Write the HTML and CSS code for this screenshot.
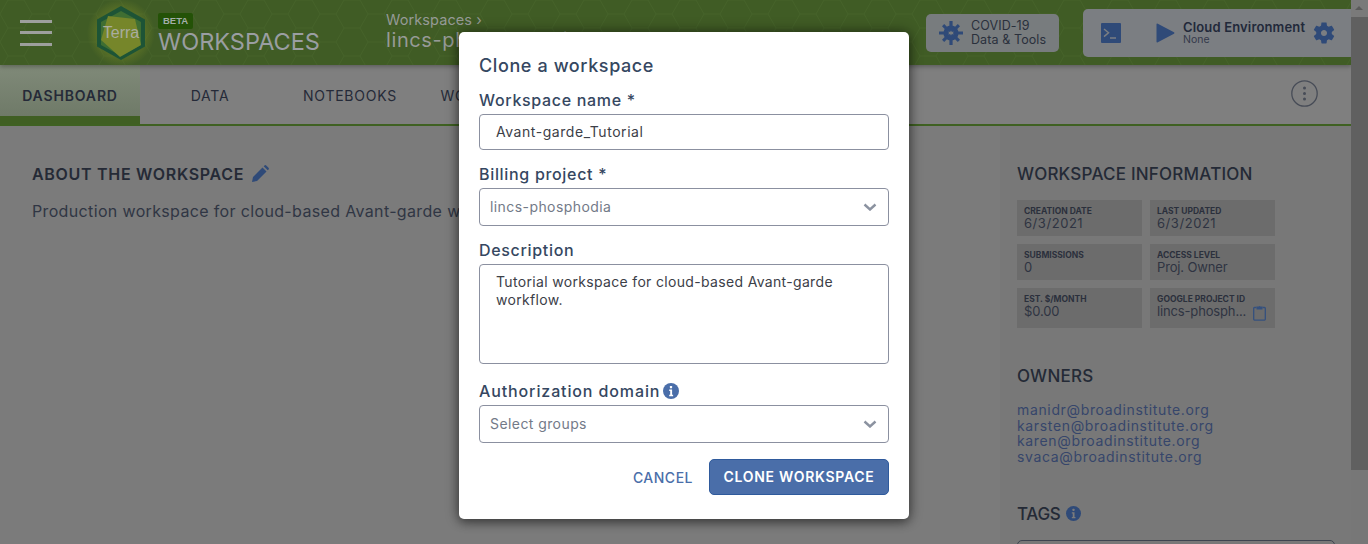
FILE: index.html
```html
<!DOCTYPE html>
<html lang="en">
<head>
<meta charset="utf-8">
<title>Clone a workspace</title>
<link rel="stylesheet" href="styles.css">
</head>
<body>
<div class="app">
  <div class="page">
    <header class="top">
      <svg class="hexbg" aria-hidden="true"><defs><pattern id="hx" width="48" height="28" patternUnits="userSpaceOnUse"><path d="M0 14l8-14h16l8 14-8 14H8zM32 14h16" fill="none" stroke="#4d6b30" stroke-width="1"/></pattern></defs><rect width="100%" height="100%" fill="url(#hx)"/></svg>
      <button class="burger" aria-label="Menu"><span></span><span></span><span></span></button>
      <svg class="logo" viewBox="0 0 70 66" aria-hidden="true">
        <defs><radialGradient id="gl"><stop offset=".6" stop-color="#6f8228" stop-opacity=".6"/><stop offset="1" stop-color="#6f8228" stop-opacity="0"/></radialGradient></defs>
        <circle cx="35" cy="33" r="34" fill="url(#gl)"/>
        <path d="M35 6l24 13.5v27L35 60 11 46.5v-27z" fill="#1d5436"/>
        <path d="M35 11l20 11v23L35 56 15 45V22z" fill="#3f6e32"/>
        <path d="M22 16l27 3 6 26-21 12-19-17z" fill="#76862a"/>
        <text x="35" y="38" text-anchor="middle" class="logotext">Terra</text>
      </svg>
      <div class="brand">
        <span class="beta">BETA</span>
        <span class="brandname">WORKSPACES</span>
      </div>
      <div class="crumbs">
        <div class="crumb">Workspaces ›</div>
        <div class="wsname">lincs-phosphodia/</div>
      </div>
      <div class="covid">
        <svg class="covidicon" viewBox="0 0 24 24" aria-hidden="true">
          <circle cx="12" cy="12" r="7.6"/>
          <path d="M10.4 0h3.2v6h-3.2zM10.4 18h3.2v6h-3.2zM0 10.4h6v3.2H0zM18 10.4h6v3.2h-6zM3 5.2L5.2 3l4.2 4.2-2.2 2.2zM14.6 16.8l2.2-2.2L21 18.800l-2.200 2.200zM18.800 3L21 5.200l-4.200 4.200-2.200-2.200zM7.200 14.600l2.200 2.200L5.200 21 3 18.800z"/>
          <path class="coviddots" d="M12 9.500l.9 1.600 1.700-.5-.5 1.400.5 1.400-1.700-.5-.9 1.600-.9-1.600-1.700.5.500-1.400-.5-1.400 1.700.5z"/>
        </svg>
        <div class="covidtext"><div>COVID-19</div><div>Data &amp; Tools</div></div>
      </div>
      <div class="cloud">
        <svg class="term" viewBox="0 0 20 20" aria-hidden="true"><rect width="20" height="20" rx="1"/><path d="M3 6l4.500 3.800L3 13.600M9 15h6" fill="none" stroke="#7b7e82" stroke-width="1.500"/></svg>
        <svg class="play" viewBox="0 0 19 20" aria-hidden="true"><path d="M.5 1.500q0-1.500 1.300-.8L18 9.200q1 .8 0 1.600L1.800 19.300q-1.300.7-1.300-.8z"/></svg>
        <div class="cloudtext"><div class="cloudname">Cloud Environment</div><div class="cloudsub">None</div></div>
        <svg class="gear" viewBox="0 0 24 24" aria-hidden="true"><path d="M19.140 12.940c.04-.3.06-.61.06-.94 0-.32-.02-.64-.07-.94l2.030-1.580c.18-.14.23-.41.12-.61l-1.920-3.320c-.12-.22-.37-.29-.59-.22l-2.390.96c-.5-.38-1.030-.7-1.620-.94l-.36-2.540c-.04-.24-.24-.41-.48-.41h-3.840c-.24 0-.43.17-.47.41l-.36 2.540c-.59.24-1.130.57-1.620.94l-2.390-.96c-.22-.08-.47 0-.59.22L2.740 8.870c-.12.21-.08.47.12.61l2.030 1.580c-.05.3-.09.63-.09.94s.02.64.07.94l-2.030 1.580c-.18.14-.23.41-.12.61l1.920 3.320c.12.22.37.29.59.22l2.390-.96c.5.38 1.030.7 1.620.94l.36 2.540c.05.24.24.41.48.41h3.840c.24 0 .44-.17.47-.41l.36-2.540c.59-.24 1.130-.56 1.620-.94l2.390.96c.22.08.47 0 .59-.22l1.920-3.320c.12-.22.07-.47-.12-.61l-2.010-1.580zM12 14.800c-1.540 0-2.800-1.260-2.800-2.800s1.260-2.800 2.800-2.800 2.800 1.260 2.800 2.800-1.260 2.800-2.800 2.800z"/></svg>
      </div>
    </header>
    <nav class="tabs">
      <div class="tab tab-active">DASHBOARD</div>
      <div class="tab">DATA</div>
      <div class="tab">NOTEBOOKS</div>
      <div class="tab">WORKFLOWS</div>
      <div class="tab">JOB HISTORY</div>
      <svg class="kebab" viewBox="0 0 27 27" aria-hidden="true"><circle cx="13.500" cy="13.500" r="12.700" fill="none" stroke="#474c57" stroke-width="1.300"/><circle cx="13.500" cy="8" r="1.500" fill="#474c57"/><circle cx="13.500" cy="13.500" r="1.500" fill="#474c57"/><circle cx="13.500" cy="19" r="1.500" fill="#474c57"/></svg>
    </nav>
    <div class="content">
      <main class="main">
        <h2 class="heading">ABOUT THE WORKSPACE
          <svg class="pencil" viewBox="0 0 18 18" aria-hidden="true"><path d="M1 17l1-5L11.500 2.500l4 4L6 16zM12.700 1.300l.8-.8a1.200 1.200 0 0 1 1.700 0l2.300 2.300a1.200 1.200 0 0 1 0 1.700l-.8.800z"/></svg>
        </h2>
        <p class="desc">Production workspace for cloud-based Avant-garde workflow.</p>
      </main>
      <aside class="side">
        <h2 class="sidehead">WORKSPACE INFORMATION</h2>
        <div class="cards">
          <div class="card"><div class="cardlabel">CREATION DATE</div><div class="cardval cardval-date">6/3/2021</div></div>
          <div class="card"><div class="cardlabel">LAST UPDATED</div><div class="cardval cardval-date">6/3/2021</div></div>
          <div class="card"><div class="cardlabel">SUBMISSIONS</div><div class="cardval">0</div></div>
          <div class="card"><div class="cardlabel">ACCESS LEVEL</div><div class="cardval">Proj. Owner</div></div>
          <div class="card card-tall"><div class="cardlabel">EST. $/MONTH</div><div class="cardval">$0.00</div></div>
          <div class="card card-tall"><div class="cardlabel">GOOGLE PROJECT ID</div><div class="cardrow"><span class="cardval">lincs-phosph...</span>
            <svg class="clip" viewBox="0 0 13 16" aria-hidden="true"><path d="M3.500 2.500H1.500a.8.8 0 0 0-.8.8v11a.8.8 0 0 0 .8.800h10a.8.8 0 0 0 .8-.8v-11a.8.8 0 0 0-.8-.8H9.500" fill="none" stroke="#34507e" stroke-width="1.300"/><path d="M3.500 1.600h2.100a1 1 0 0 1 1.800 0h2.100v3h-6z" fill="#34507e"/></svg></div></div>
        </div>
        <h2 class="sidehead owners">OWNERS</h2>
        <ul class="emails">
          <li>manidr@broadinstitute.org</li>
          <li>karsten@broadinstitute.org</li>
          <li>karen@broadinstitute.org</li>
          <li>svaca@broadinstitute.org</li>
        </ul>
        <h2 class="sidehead tags">TAGS
          <svg class="info info-dark" viewBox="0 0 16 16" aria-hidden="true"><circle cx="8" cy="8" r="8"/><rect class="i" x="6.900" y="3" width="2.200" height="2.200" rx=".5"/><path class="i" d="M6.200 6.600h2.900v5.200h1v1.400H6.200v-1.400h1V8H6.200z"/></svg>
        </h2>
        <div class="tagbox"></div>
      </aside>
    </div>
  </div>
  <div class="scrollbar">
    <div class="sb-arrow"></div>
    <div class="sb-thumb"></div>
  </div>
</div>

<div class="modal" role="dialog">
  <h1 class="modal-title">Clone a workspace</h1>
  <label class="label">Workspace name *</label>
  <div class="input">Avant-garde_Tutorial</div>
  <label class="label gap">Billing project *</label>
  <div class="select"><span>lincs-phosphodia</span><svg class="chev" viewBox="0 0 14 8" aria-hidden="true"><path d="M1.500 1.500L7 6.500l5.500-5"/></svg></div>
  <label class="label gap">Description</label>
  <div class="textarea">Tutorial workspace for cloud-based Avant-garde workflow.</div>
  <label class="label label-auth gap-lg">Authorization domain
    <svg class="info" viewBox="0 0 16 16" aria-hidden="true"><circle cx="8" cy="8" r="8"/><rect class="i" x="6.900" y="3" width="2.200" height="2.200" rx=".5"/><path class="i" d="M6.200 6.600h2.900v5.200h1v1.400H6.200v-1.400h1V8H6.200z"/></svg>
  </label>
  <div class="select"><span>Select groups</span><svg class="chev" viewBox="0 0 14 8" aria-hidden="true"><path d="M1.500 1.500L7 6.500l5.500-5"/></svg></div>
  <div class="actions">
    <span class="cancel">CANCEL</span>
    <span class="primary">CLONE WORKSPACE</span>
  </div>
</div>
</body>
</html>
```

FILE: styles.css
```css
* { box-sizing: border-box; }
html, body { margin: 0; height: 100%; overflow: hidden; }
body { font-family: Inter, "Noto Sans", "Liberation Sans", sans-serif; color: #2a303c; background: #7b7b7b; }
h1, h2, p, ul { margin: 0; padding: 0; }

.app { display: flex; height: 544px; }
.page { flex: 1; min-width: 0; display: flex; flex-direction: column; overflow: hidden; }

/* scrollbar */
.scrollbar { width: 17px; background: #777; display: flex; flex-direction: column; }
.sb-arrow { height: 17px; position: relative; background: #7a7a7a; }
.sb-arrow::after { content: ""; position: absolute; left: 4px; top: 6px; border: 4.500px solid transparent; border-top: 0; border-bottom: 4px solid #5a5a5a; }
.sb-thumb { height: 453px; background: #606060; }

/* header */
.top { height: 65px; flex: none; background: #405c25; display: flex; align-items: center; position: relative; box-shadow: 0 2px 4px rgba(0,0,0,.25); z-index: 1; }
.hexbg { position: absolute; inset: 0; width: 100%; height: 100%; opacity: .45; }
.burger { position: relative; width: 32px; height: 26px; margin-left: 20px; padding: 0; border: 0; background: none; display: flex; flex-direction: column; justify-content: space-between; }
.burger span { height: 3px; background: #9d9f9d; display: block; }
.logo { position: relative; width: 70px; height: 66px; margin-left: 34px; flex: none; }
.logotext { font-family: "Liberation Sans Narrow", "Liberation Sans", sans-serif; font-size: 16px; fill: #a9ada0; }
.brand { position: relative; display: flex; flex-direction: column; align-items: flex-start; margin-left: 2px; width: 228px; }
.beta { background: #245207; color: #a3aeab; font: 700 9.500px "Liberation Sans", sans-serif; line-height: 16px; padding: 0 5px; border-radius: 2px; margin-top: 2px; }
.brandname { font-size: 23.500px; line-height: 26px; color: #9a9ea2; }
.crumbs { position: relative; width: 540px; white-space: nowrap; color: #969a96; align-self: flex-start; margin-top: 11px; }
.crumb { font-size: 14.500px; line-height: 18px; letter-spacing: .1px; }
.wsname { font-size: 20px; line-height: 22px; letter-spacing: .6px; }
.covid { position: relative; width: 133px; height: 38px; display: flex; align-items: center; background: #787c7e; border-radius: 5px; padding-left: 13px; gap: 8px; }
.covidicon { width: 24px; height: 24px; fill: #2f4a78; flex: none; }
.coviddots { fill: #787c7e; }
.covidtext { font-size: 12.500px; line-height: 14px; letter-spacing: .1px; color: #2a303c; }
.cloud { position: relative; width: 268px; height: 48px; margin-left: 24px; background: #7b7e82; border-radius: 5px 0 0 5px; display: flex; align-items: center; padding-left: 18px; }
.term { width: 20px; height: 20px; fill: #2f4a78; flex: none; }
.play { width: 19px; height: 20px; fill: #2f4a78; flex: none; margin-left: 35px; }
.cloudtext { margin-left: 8px; width: 128px; }
.cloudname { font-size: 13px; font-weight: 600; line-height: 14px; letter-spacing: .15px; color: #22293a; white-space: nowrap; }
.cloudsub { font-size: 10.500px; line-height: 11px; color: #34394a; }
.gear { width: 26px; height: 26px; fill: #2f4a78; flex: none; }

/* tabs */
.tabs { height: 61px; flex: none; background: #7f7f7f; border-bottom: 2px solid #3f6122; display: flex; align-items: stretch; padding-right: 33px; }
.tab { width: 140px; display: flex; align-items: center; justify-content: center; padding-top: 1px; font-size: 14px; letter-spacing: .75px; color: #252a38; }
.tab-active { font-weight: 600; letter-spacing: .85px; background: linear-gradient(#808a79, #6f7a68); border-bottom: 8px solid #405f23; padding-top: 9px; }
.kebab { width: 27px; height: 27px; margin: 15px 0 0 auto; }

/* content */
.content { flex: 1; display: flex; min-height: 0; }
.main { flex: 1; padding: 38px 32px 0; background: #7b7b7b; }
.heading { font-size: 16px; font-weight: 600; line-height: 20px; letter-spacing: .7px; color: #252a36; display: flex; align-items: center; gap: 7px; white-space: nowrap; }
.pencil { width: 18px; height: 18px; fill: #2f4a78; }
.desc { margin-top: 17px; font-size: 16px; line-height: 20px; letter-spacing: .35px; white-space: nowrap; color: #303644; }
.side { width: 351px; flex: none; padding: 38px 16px 0 17px; background: #787878; }
.sidehead { font-size: 17px; font-weight: 500; line-height: 20px; letter-spacing: .22px; color: #242a36; display: flex; align-items: center; gap: 5px; }
.cards { margin-top: 16px; display: grid; grid-template-columns: 125px 125px; gap: 8px; }
.card { height: 36px; background: #6c6c6c; padding: 6px 7px 0; }
.card-tall { height: 40px; }
.cardlabel { font-size: 8.500px; font-weight: 700; line-height: 11px; color: #2b303c; white-space: nowrap; }
.cardval { font-size: 13px; line-height: 13px; letter-spacing: -.15px; color: #2f3442; white-space: nowrap; }
.cardval-date { letter-spacing: .55px; }
.cardrow { display: flex; justify-content: space-between; padding-right: 2px; }
.clip { width: 13px; height: 16px; margin-top: 0; flex: none; }
.owners { margin-top: 38px; }
.emails { list-style: none; margin-top: 16px; font-size: 14px; line-height: 15.700px; letter-spacing: .65px; color: #36466b; }
.tags { margin-top: 39px; letter-spacing: -.3px; }
.info { width: 16px; height: 16px; flex: none; fill: #4a6ea9; }
.info-dark { fill: #2f4a78; width: 15px; height: 15px; }
.info .i { fill: #fff; }
.info-dark .i { fill: #7b7b7b; }
.tagbox { margin-top: 16px; width: 318px; height: 40px; border: 1px solid #3e4450; border-radius: 5px; }

/* modal */
.modal { position: absolute; left: 459px; top: 32px; width: 450px; height: 487px; z-index: 2; background: #fff; border-radius: 5px; padding: 23px 20px 24px; box-shadow: 0 0 14px rgba(0,0,0,.45), 0 4px 10px rgba(0,0,0,.3); color: #354761; }
.modal-title { font-size: 18px; font-weight: 500; line-height: 22px; letter-spacing: .6px; margin-bottom: 13px; }
.label { display: flex; align-items: center; gap: 3px; font-size: 16px; font-weight: 500; line-height: 20px; letter-spacing: .68px; margin-bottom: 4px; }
.label-auth { letter-spacing: .88px; }
.gap { margin-top: 14px; }
.gap-lg { margin-top: 17px; }
.input, .textarea, .select { border: 1px solid #8b90a0; border-radius: 4px; font-size: 14px; letter-spacing: .33px; }
.input { height: 36px; padding: 0 16px 2px; display: flex; align-items: center; color: #3c4048; letter-spacing: .55px; }
.textarea { height: 100px; padding: 8px 16px; line-height: 18px; color: #3c4048; }
.select { height: 38px; padding: 0 11px 2px 10px; display: flex; align-items: center; justify-content: space-between; color: #737a88; letter-spacing: .42px; }
.chev { width: 14px; height: 8px; fill: none; stroke: #8b92a0; stroke-width: 2.400; margin-top: 2px; }
.actions { margin-top: 16px; display: flex; justify-content: flex-end; align-items: center; gap: 16px; }
.cancel { font-size: 14px; font-weight: 500; letter-spacing: .5px; color: #4a6ea9; }
.primary { width: 180px; height: 36px; padding-bottom: 1px; border: 1px solid #2f5a9c; border-radius: 5px; background: #4a6ea9; color: #fff; font-size: 14px; font-weight: 600; display: flex; align-items: center; justify-content: center; letter-spacing: .7px; }
```
